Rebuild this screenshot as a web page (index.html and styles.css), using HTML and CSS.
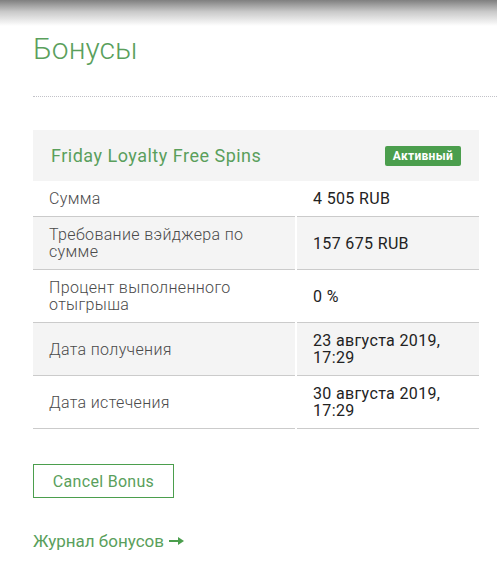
FILE: index.html
```html
<!DOCTYPE html>
<html lang="ru">
<head>
  <meta charset="UTF-8" />
  <meta name="viewport" content="width=device-width, initial-scale=1.0" />
  <title>Бонусы</title>
  <link rel="stylesheet" href="styles.css">
</head>
<body>
  <div class="top-shadow"></div>
  <div class="page">
    <h1 class="page-title">Бонусы</h1>

    <div class="bonus">
      <div class="bonus-head">
        <span class="bonus-name">Friday Loyalty Free Spins</span>
        <span class="badge">Активный</span>
      </div>
      <div class="bonus-row">
        <div class="cell label">Сумма</div>
        <div class="cell value">4 505 RUB</div>
      </div>
      <div class="bonus-row gray">
        <div class="cell label">Требование вэйджера по сумме</div>
        <div class="cell value">157 675 RUB</div>
      </div>
      <div class="bonus-row">
        <div class="cell label">Процент выполненного отыгрыша</div>
        <div class="cell value">0 %</div>
      </div>
      <div class="bonus-row gray">
        <div class="cell label">Дата получения</div>
        <div class="cell value">23 августа 2019, 17:29</div>
      </div>
      <div class="bonus-row">
        <div class="cell label">Дата истечения</div>
        <div class="cell value">30 августа 2019, 17:29</div>
      </div>
    </div>

    <button class="btn-outline">Cancel Bonus</button>

    <a class="history-link" href="#">Журнал бонусов
      <svg width="15" height="10" viewBox="0 0 15 10"><path d="M0 4h9V1l6 4-6 4V6H0z" fill="currentColor"/></svg>
    </a>
  </div>
</body>
</html>
```

FILE: styles.css
```css
:root {
  --green: #5a9f5c;
  --green-dark: #4b9e4d;
  --row-gray: #f4f4f4;
  --line: #cbcbcb;
}
body {
  margin: 0;
  font-family: Roboto, "Noto Sans", sans-serif;
  background: #fff;
}
.top-shadow {
  height: 26px;
  background: linear-gradient(to bottom, #7f7f7f, #c9c9c9 45%, #fff);
}
.page {
  padding-left: 33px;
  padding-top: 4px;
}
.page-title {
  margin: 0;
  padding-bottom: 29px;
  font-size: 30px;
  line-height: 37px;
  font-weight: 300;
  color: var(--green);
  border-bottom: 1px dotted #c2c2c8;
}
.bonus {
  width: 446px;
  margin-top: 33px;
}
.bonus-head {
  display: flex;
  align-items: center;
  justify-content: space-between;
  height: 51px;
  padding: 0 18px;
  background: var(--row-gray);
}
.bonus-name {
  font-size: 18px;
  letter-spacing: 0.5px;
  color: var(--green);
}
.badge {
  background: var(--green-dark);
  color: #fff;
  font-size: 12px;
  font-weight: bold;
  line-height: 20px;
  padding: 0 8px;
  border-radius: 2px;
  letter-spacing: 0.3px;
}
.bonus-row {
  display: grid;
  grid-template-columns: 262px 182px;
  column-gap: 2px;
}
.cell {
  display: flex;
  align-items: center;
  padding: 9px 16px;
  font-size: 16px;
  line-height: 17px;
  letter-spacing: 0.35px;
  border-bottom: 1px solid var(--line);
}
.bonus-row.gray .cell {
  background: var(--row-gray);
}
.label {
  color: #4a4a4a;
  font-weight: 300;
}
.value {
  color: #222;
}
.btn-outline {
  display: block;
  margin-top: 35px;
  height: 34px;
  width: 141px;
  padding: 0;
  background: #fff;
  border: 1px solid var(--green-dark);
  color: var(--green);
  font-family: inherit;
  font-size: 16px;
  letter-spacing: 0.3px;
  cursor: pointer;
}
.history-link {
  display: inline-flex;
  align-items: center;
  gap: 5px;
  margin-top: 33px;
  font-size: 17px;
  color: var(--green);
  text-decoration: none;
}
.history-link svg {
  color: var(--green-dark);
}
```
